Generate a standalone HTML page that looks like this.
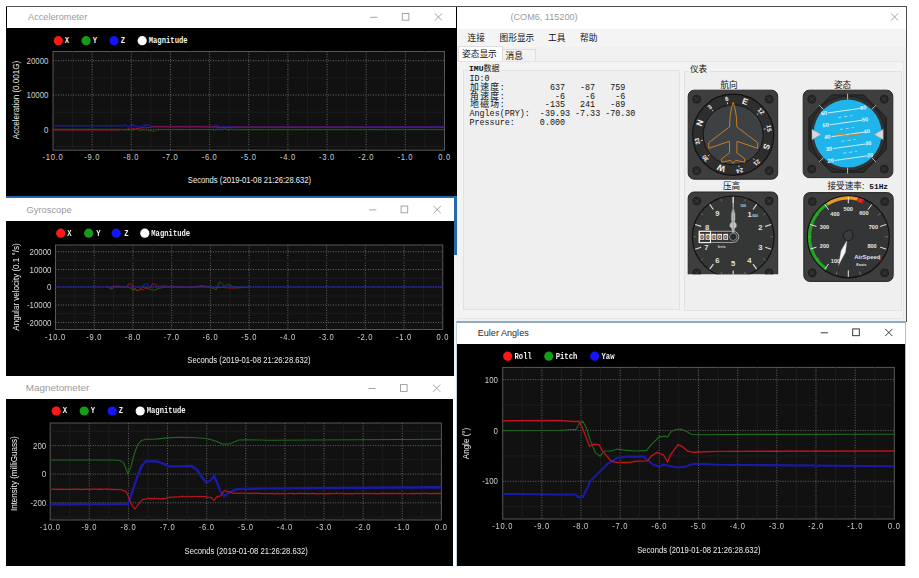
<!DOCTYPE html>
<html><head><meta charset="utf-8"><title>IMU</title>
<style>
html,body{margin:0;padding:0;background:#fff;}
body{width:919px;height:578px;position:relative;overflow:hidden;font-family:'Liberation Sans', 'Noto Sans CJK SC', sans-serif;}
#root{position:absolute;left:0;top:0;width:919px;height:578px;filter:blur(0.35px);}
.abs{position:absolute;}
.plot{position:absolute;display:block;}
.plot text{font-family:'Liberation Sans', 'Noto Sans CJK SC', sans-serif;fill:#d0d0d0;}
.plot .tk{font-size:9.2px;}
.plot .tx{font-size:9px;letter-spacing:0.85px;}
.plot .ax{font-size:9.6px;fill:#f0f0f0;}
.plot .lg{font-family:'Liberation Mono', 'Noto Sans CJK SC', monospace;font-weight:bold;font-size:8.8px;fill:#f4f4f4;}
.g{stroke:#666;stroke-width:1;stroke-dasharray:1 1.5;}
.gm{stroke:#1d1d1d;stroke-width:1;}
.tbar{position:absolute;background:#fff;height:22px;font-size:9.2px;color:#9a9a9a;line-height:22px;white-space:nowrap;}
.tbar span{position:absolute;top:0;}
.menu span,.tabs span{position:absolute;white-space:nowrap;}
pre{margin:0;}
.hz{font-family:'Liberation Mono', 'Noto Sans CJK SC', monospace;font-weight:bold;font-size:7.9px;margin-left:2.5px;}
.cj{display:inline-block;width:10.06px;text-align:center;font-size:8.8px;}
</style></head><body><div id="root">

<div class="abs" id="mainwin" style="left:456px;top:6px;width:449px;height:314.6px;background:#f0f0f0;border:1px solid #4d4d4d;border-bottom:none;border-left:1px solid #ececec;">
<div class="tbar" style="left:0;top:0;width:449px;height:21.5px;line-height:21.5px;font-size:9.1px;"><span style="left:53.5px;">(COM6, 115200)</span></div>
<div class="menu abs" style="left:0;top:21.5px;width:449px;height:18.5px;background:#f4f4f4;font-size:8.7px;line-height:18.5px;color:#111;"><span style="left:10.5px;">连接</span><span style="left:42.5px;">图形显示</span><span style="left:91px;">工具</span><span style="left:123px;">帮助</span></div>
<div class="tabs abs" style="left:0;top:40px;width:449px;height:14px;background:#f0f0f0;font-size:8.7px;color:#111;"><div class="abs" style="left:1px;top:-1px;width:44.5px;height:15.5px;background:#fff;border:1px solid #dcdcdc;border-bottom:none;box-sizing:border-box;"></div><div class="abs" style="left:45px;top:2px;width:33.5px;height:12px;background:#f2f2f2;border:1px solid #dedede;border-bottom:none;box-sizing:border-box;"></div><span style="left:5px;top:1px;line-height:13px;">姿态显示</span><span style="left:48.5px;top:2.5px;line-height:13px;">消息</span></div>
<div class="abs" style="left:0px;top:54px;width:447px;height:258px;background:#f3f3f3;border:1px solid #e6e6e6;border-left:none;box-sizing:border-box;"></div>
<div class="abs" style="left:5.5px;top:63px;width:217.5px;height:239.6px;border:1px solid #e2e2e2;box-sizing:border-box;background:#efefef;"></div>
<div class="abs" style="left:226.5px;top:63.5px;width:218px;height:240.8px;border:1px solid #e2e2e2;box-sizing:border-box;background:#efefef;"></div>
<div class="abs" style="left:10.5px;top:56px;padding:0 1.5px;background:#f0f0f0;font-family:'Liberation Mono', 'Noto Sans CJK SC', monospace;font-size:8.05px;line-height:12px;color:#111;white-space:nowrap;"><b>IMU</b>数据</div>
<div class="abs" style="left:231.5px;top:56.3px;padding:0 1.5px;background:#f0f0f0;font-size:8.6px;line-height:12px;color:#111;white-space:nowrap;">仪表</div>
<div class="abs" id="imu" style="left:12.5px;top:68.2px;font-family:'Liberation Mono', 'Noto Sans CJK SC', monospace;font-size:8.38px;line-height:8.7px;color:#111;"><div style="height:8.7px;white-space:pre;">ID:0</div><div style="height:8.7px;white-space:pre;"><span class="cj">加</span><span class="cj">速</span><span class="cj">度</span>:         637   -87   759</div><div style="height:8.7px;white-space:pre;"><span class="cj">角</span><span class="cj">速</span><span class="cj">度</span>:          -6    -6    -6</div><div style="height:8.7px;white-space:pre;"><span class="cj">地</span><span class="cj">磁</span><span class="cj">场</span>:        -135   241   -89</div><div style="height:8.7px;white-space:pre;">Angles(PRY):  -39.93 -7.33 -70.30</div><div style="height:8.7px;white-space:pre;">Pressure:     0.000</div></div>
<div class="abs" style="left:263.5px;top:72.5px;font-size:8.6px;line-height:11px;color:#111;white-space:nowrap;">航向</div>
<div class="abs" style="left:377px;top:72.5px;font-size:8.6px;line-height:11px;color:#111;white-space:nowrap;">姿态</div>
<div class="abs" style="left:266px;top:173.5px;font-size:8.6px;line-height:11px;color:#111;white-space:nowrap;">压高</div>
<div class="abs" style="left:370.5px;top:173.5px;font-size:8.6px;line-height:11px;color:#111;white-space:nowrap;">接受速率: <span class="hz">51Hz</span></div>
</div>
<svg class="abs" style="left:0;top:0;" width="919" height="578" viewBox="0 0 919 578"><defs><clipPath id="altclip"><rect x="686" y="190" width="95" height="84.2"/></clipPath></defs>
<path d="M891 13.3 l7.2 7.2 M898.2 13.3 l-7.2 7.2" stroke="#9a9a9a" stroke-width="0.9" fill="none"/>
<g><rect x="688.2" y="90.2" width="89.5" height="89" rx="6" fill="#3e3e3e" stroke="#262626" stroke-width="1"/><circle cx="696.7" cy="99.2" r="4" fill="#262626" stroke="#1c1c1c" stroke-width="0.8"/><path d="M694.5 97 l4.4 4.4 M698.9 97 l-4.4 4.4" stroke="#3a3a3a" stroke-width="0.9"/><circle cx="769.2" cy="99.2" r="4" fill="#262626" stroke="#1c1c1c" stroke-width="0.8"/><path d="M767 97 l4.4 4.4 M771.4 97 l-4.4 4.4" stroke="#3a3a3a" stroke-width="0.9"/><circle cx="696.7" cy="170.7" r="4" fill="#262626" stroke="#1c1c1c" stroke-width="0.8"/><path d="M694.5 168.5 l4.4 4.4 M698.9 168.5 l-4.4 4.4" stroke="#3a3a3a" stroke-width="0.9"/><circle cx="769.2" cy="170.7" r="4" fill="#262626" stroke="#1c1c1c" stroke-width="0.8"/><path d="M767 168.5 l4.4 4.4 M771.4 168.5 l-4.4 4.4" stroke="#3a3a3a" stroke-width="0.9"/><circle cx="733.2" cy="134.8" r="40.6" fill="#2e2e2e" stroke="#111" stroke-width="1.2"/><circle cx="733.2" cy="134.8" r="30" fill="#3d4144" stroke="#151515" stroke-width="1"/><text transform="translate(699.68 122.8) rotate(-70.3)" text-anchor="middle" font-family="'Liberation Sans', 'Noto Sans CJK SC', sans-serif" font-weight="bold" font-size="8.5" fill="#f4f4f4" y="3.06">N</text><text transform="translate(709.53 106.89) rotate(-40.3)" text-anchor="middle" font-family="'Liberation Sans', 'Noto Sans CJK SC', sans-serif" font-weight="bold" font-size="6.0" fill="#f4f4f4" y="2.16">3</text><line x1="713.15" y1="111.16" x2="711.86" y2="109.63" stroke="#eee" stroke-width="0.8"/><text transform="translate(726.66 98.79) rotate(-10.3)" text-anchor="middle" font-family="'Liberation Sans', 'Noto Sans CJK SC', sans-serif" font-weight="bold" font-size="6.0" fill="#f4f4f4" y="2.16">6</text><line x1="727.66" y1="104.3" x2="727.3" y2="102.33" stroke="#eee" stroke-width="0.8"/><text transform="translate(745.2 101.28) rotate(19.7)" text-anchor="middle" font-family="'Liberation Sans', 'Noto Sans CJK SC', sans-serif" font-weight="bold" font-size="8.5" fill="#f4f4f4" y="3.06">E</text><text transform="translate(761.11 111.13) rotate(49.7)" text-anchor="middle" font-family="'Liberation Sans', 'Noto Sans CJK SC', sans-serif" font-weight="bold" font-size="6.0" fill="#f4f4f4" y="2.16">12</text><line x1="756.84" y1="114.75" x2="758.37" y2="113.46" stroke="#eee" stroke-width="0.8"/><text transform="translate(769.21 128.26) rotate(79.7)" text-anchor="middle" font-family="'Liberation Sans', 'Noto Sans CJK SC', sans-serif" font-weight="bold" font-size="6.0" fill="#f4f4f4" y="2.16">15</text><line x1="763.7" y1="129.26" x2="765.67" y2="128.9" stroke="#eee" stroke-width="0.8"/><text transform="translate(766.72 146.8) rotate(109.7)" text-anchor="middle" font-family="'Liberation Sans', 'Noto Sans CJK SC', sans-serif" font-weight="bold" font-size="8.5" fill="#f4f4f4" y="3.06">S</text><text transform="translate(756.87 162.71) rotate(139.7)" text-anchor="middle" font-family="'Liberation Sans', 'Noto Sans CJK SC', sans-serif" font-weight="bold" font-size="6.0" fill="#f4f4f4" y="2.16">21</text><line x1="753.25" y1="158.44" x2="754.54" y2="159.97" stroke="#eee" stroke-width="0.8"/><text transform="translate(739.74 170.81) rotate(169.7)" text-anchor="middle" font-family="'Liberation Sans', 'Noto Sans CJK SC', sans-serif" font-weight="bold" font-size="6.0" fill="#f4f4f4" y="2.16">24</text><line x1="738.74" y1="165.3" x2="739.1" y2="167.27" stroke="#eee" stroke-width="0.8"/><text transform="translate(721.2 168.32) rotate(199.7)" text-anchor="middle" font-family="'Liberation Sans', 'Noto Sans CJK SC', sans-serif" font-weight="bold" font-size="8.5" fill="#f4f4f4" y="3.06">W</text><text transform="translate(705.29 158.47) rotate(229.7)" text-anchor="middle" font-family="'Liberation Sans', 'Noto Sans CJK SC', sans-serif" font-weight="bold" font-size="6.0" fill="#f4f4f4" y="2.16">30</text><line x1="709.56" y1="154.85" x2="708.03" y2="156.14" stroke="#eee" stroke-width="0.8"/><text transform="translate(697.19 141.34) rotate(259.7)" text-anchor="middle" font-family="'Liberation Sans', 'Noto Sans CJK SC', sans-serif" font-weight="bold" font-size="6.0" fill="#f4f4f4" y="2.16">33</text><line x1="702.7" y1="140.34" x2="700.73" y2="140.7" stroke="#eee" stroke-width="0.8"/><path d="M733.2 102.3 L734.8 107.8 L736.4 116.8 L736.8 126.8 L757.7 142.8 L757.7 148.3 L737 141.3 L736.8 152.8 L744.7 158.8 L744.7 162.3 L735.7 160.3 L733.2 163.3 L730.7 160.3 L721.7 162.3 L721.7 158.8 L729.6 152.8 L729.4 141.3 L708.7 148.3 L708.7 142.8 L729.6 126.8 L730 116.8 L731.6 107.8 Z" fill="none" stroke="#d8831c" stroke-width="0.9" stroke-linejoin="round"/></g>
<g><rect x="803.2" y="90.2" width="89.6" height="87.4" rx="6" fill="#3e3e3e" stroke="#262626" stroke-width="1"/><circle cx="811.7" cy="99.2" r="4" fill="#262626" stroke="#1c1c1c" stroke-width="0.8"/><path d="M809.5 97 l4.4 4.4 M813.9 97 l-4.4 4.4" stroke="#3a3a3a" stroke-width="0.9"/><circle cx="884.3" cy="99.2" r="4" fill="#262626" stroke="#1c1c1c" stroke-width="0.8"/><path d="M882.1 97 l4.4 4.4 M886.5 97 l-4.4 4.4" stroke="#3a3a3a" stroke-width="0.9"/><circle cx="811.7" cy="169.1" r="4" fill="#262626" stroke="#1c1c1c" stroke-width="0.8"/><path d="M809.5 166.9 l4.4 4.4 M813.9 166.9 l-4.4 4.4" stroke="#3a3a3a" stroke-width="0.9"/><circle cx="884.3" cy="169.1" r="4" fill="#262626" stroke="#1c1c1c" stroke-width="0.8"/><path d="M882.1 166.9 l4.4 4.4 M886.5 166.9 l-4.4 4.4" stroke="#3a3a3a" stroke-width="0.9"/><path d="M863.6 94.96 L886.24 117.6 L886.24 149.6 L863.6 172.24 L831.6 172.24 L808.96 149.6 L808.96 117.6 L831.6 94.96 Z" fill="#2c2c2c" stroke="#1a1a1a" stroke-width="1"/><circle cx="847.6" cy="133.6" r="37.5" fill="#333" stroke="#1b1b1b" stroke-width="0.8"/><line x1="847.6" y1="99.6" x2="847.6" y2="93.6" stroke="#c8c8c8" stroke-width="0.9"/><line x1="871.64" y1="109.56" x2="875.88" y2="105.32" stroke="#c8c8c8" stroke-width="0.9"/><line x1="871.64" y1="157.64" x2="875.88" y2="161.88" stroke="#c8c8c8" stroke-width="0.9"/><line x1="847.6" y1="167.6" x2="847.6" y2="173.6" stroke="#c8c8c8" stroke-width="0.9"/><line x1="823.56" y1="157.64" x2="819.32" y2="161.88" stroke="#c8c8c8" stroke-width="0.9"/><line x1="823.56" y1="109.56" x2="819.32" y2="105.32" stroke="#c8c8c8" stroke-width="0.9"/><circle cx="847.6" cy="133.6" r="34" fill="#1fb4ea"/><g transform="rotate(-8 847.6 133.6)" stroke="#e8f8ff" fill="#e8f8ff"><line x1="831.1" y1="110.4" x2="864.1" y2="110.4" stroke-width="0.8"/><text x="827.1" y="112" font-family="'Liberation Sans', 'Noto Sans CJK SC', sans-serif" font-size="5.6" font-weight="bold" stroke="none" text-anchor="middle">60</text><text x="866.8" y="112" font-family="'Liberation Sans', 'Noto Sans CJK SC', sans-serif" font-size="5.6" font-weight="bold" stroke="none" text-anchor="middle">60</text><line x1="840.6" y1="116.4" x2="854.6" y2="116.4" stroke-width="0.6" stroke-dasharray="3 3"/><line x1="831.1" y1="122.4" x2="864.1" y2="122.4" stroke-width="0.8"/><text x="827.1" y="124" font-family="'Liberation Sans', 'Noto Sans CJK SC', sans-serif" font-size="5.6" font-weight="bold" stroke="none" text-anchor="middle">50</text><text x="866.8" y="124" font-family="'Liberation Sans', 'Noto Sans CJK SC', sans-serif" font-size="5.6" font-weight="bold" stroke="none" text-anchor="middle">50</text><line x1="840.6" y1="128.4" x2="854.6" y2="128.4" stroke-width="0.6" stroke-dasharray="3 3"/><line x1="831.1" y1="134.4" x2="864.1" y2="134.4" stroke-width="0.8"/><text x="827.1" y="136" font-family="'Liberation Sans', 'Noto Sans CJK SC', sans-serif" font-size="5.6" font-weight="bold" stroke="none" text-anchor="middle">40</text><text x="866.8" y="136" font-family="'Liberation Sans', 'Noto Sans CJK SC', sans-serif" font-size="5.6" font-weight="bold" stroke="none" text-anchor="middle">40</text><line x1="840.6" y1="140.4" x2="854.6" y2="140.4" stroke-width="0.6" stroke-dasharray="3 3"/><line x1="831.1" y1="146.4" x2="864.1" y2="146.4" stroke-width="0.8"/><text x="827.1" y="148" font-family="'Liberation Sans', 'Noto Sans CJK SC', sans-serif" font-size="5.6" font-weight="bold" stroke="none" text-anchor="middle">30</text><text x="866.8" y="148" font-family="'Liberation Sans', 'Noto Sans CJK SC', sans-serif" font-size="5.6" font-weight="bold" stroke="none" text-anchor="middle">30</text><line x1="840.6" y1="152.4" x2="854.6" y2="152.4" stroke-width="0.6" stroke-dasharray="3 3"/><line x1="831.1" y1="158.4" x2="864.1" y2="158.4" stroke-width="0.8"/><text x="827.1" y="160" font-family="'Liberation Sans', 'Noto Sans CJK SC', sans-serif" font-size="5.6" font-weight="bold" stroke="none" text-anchor="middle">20</text><text x="866.8" y="160" font-family="'Liberation Sans', 'Noto Sans CJK SC', sans-serif" font-size="5.6" font-weight="bold" stroke="none" text-anchor="middle">20</text></g><path d="M812 139.7 l0 -10.4 l8.8 5.2 z" fill="#d8d8d8" stroke="#999" stroke-width="0.4"/><path d="M883.2 139.7 l0 -10.4 l-8.8 5.2 z" fill="#d8d8d8" stroke="#999" stroke-width="0.4"/><path d="M836.1 134.8 h9 l2.5 1.6 l2.5 -1.6 h9" fill="none" stroke="#d8831c" stroke-width="1.1"/></g>
<g clip-path="url(#altclip)"><rect x="688.2" y="192" width="89.5" height="92" rx="6" fill="#3e3e3e" stroke="#262626" stroke-width="1"/><circle cx="696.7" cy="201" r="4" fill="#262626" stroke="#1c1c1c" stroke-width="0.8"/><path d="M694.5 198.8 l4.4 4.4 M698.9 198.8 l-4.4 4.4" stroke="#3a3a3a" stroke-width="0.9"/><circle cx="769.2" cy="201" r="4" fill="#262626" stroke="#1c1c1c" stroke-width="0.8"/><path d="M767 198.8 l4.4 4.4 M771.4 198.8 l-4.4 4.4" stroke="#3a3a3a" stroke-width="0.9"/><circle cx="696.7" cy="273" r="4" fill="#262626" stroke="#1c1c1c" stroke-width="0.8"/><path d="M694.5 270.8 l4.4 4.4 M698.9 270.8 l-4.4 4.4" stroke="#3a3a3a" stroke-width="0.9"/><circle cx="769.2" cy="273" r="4" fill="#262626" stroke="#1c1c1c" stroke-width="0.8"/><path d="M767 270.8 l4.4 4.4 M771.4 270.8 l-4.4 4.4" stroke="#3a3a3a" stroke-width="0.9"/><circle cx="733.2" cy="236.8" r="40.8" fill="#343735" stroke="#111" stroke-width="1.2"/><line x1="733.2" y1="203.1" x2="733.2" y2="196.8" stroke="#dedede" stroke-width="1.1"/><line x1="744.63" y1="201.61" x2="745.56" y2="198.76" stroke="#7c7c7c" stroke-width="0.7"/><line x1="753.01" y1="209.54" x2="756.71" y2="204.44" stroke="#dedede" stroke-width="1.1"/><line x1="763.13" y1="215.05" x2="765.56" y2="213.29" stroke="#7c7c7c" stroke-width="0.7"/><line x1="765.25" y1="226.39" x2="771.24" y2="224.44" stroke="#dedede" stroke-width="1.1"/><line x1="770.2" y1="236.8" x2="773.2" y2="236.8" stroke="#7c7c7c" stroke-width="0.7"/><line x1="765.25" y1="247.21" x2="771.24" y2="249.16" stroke="#dedede" stroke-width="1.1"/><line x1="763.13" y1="258.55" x2="765.56" y2="260.31" stroke="#7c7c7c" stroke-width="0.7"/><line x1="753.01" y1="264.06" x2="756.71" y2="269.16" stroke="#dedede" stroke-width="1.1"/><line x1="744.63" y1="271.99" x2="745.56" y2="274.84" stroke="#7c7c7c" stroke-width="0.7"/><line x1="733.2" y1="270.5" x2="733.2" y2="276.8" stroke="#dedede" stroke-width="1.1"/><line x1="721.77" y1="271.99" x2="720.84" y2="274.84" stroke="#7c7c7c" stroke-width="0.7"/><line x1="713.39" y1="264.06" x2="709.69" y2="269.16" stroke="#dedede" stroke-width="1.1"/><line x1="703.27" y1="258.55" x2="700.84" y2="260.31" stroke="#7c7c7c" stroke-width="0.7"/><line x1="701.15" y1="247.21" x2="695.16" y2="249.16" stroke="#dedede" stroke-width="1.1"/><line x1="696.2" y1="236.8" x2="693.2" y2="236.8" stroke="#7c7c7c" stroke-width="0.7"/><line x1="701.15" y1="226.39" x2="695.16" y2="224.44" stroke="#dedede" stroke-width="1.1"/><line x1="703.27" y1="215.05" x2="700.84" y2="213.29" stroke="#7c7c7c" stroke-width="0.7"/><line x1="713.39" y1="209.54" x2="709.69" y2="204.44" stroke="#dedede" stroke-width="1.1"/><line x1="721.77" y1="201.61" x2="720.84" y2="198.76" stroke="#7c7c7c" stroke-width="0.7"/><text x="717.25" y="216.1" font-family="'Liberation Sans', 'Noto Sans CJK SC', sans-serif" font-size="7.6" font-weight="bold" fill="#e2e2e2" text-anchor="middle">9</text><text x="707" y="229.8" font-family="'Liberation Sans', 'Noto Sans CJK SC', sans-serif" font-size="7.6" font-weight="bold" fill="#e2e2e2" text-anchor="middle">8</text><text x="706.35" y="249.8" font-family="'Liberation Sans', 'Noto Sans CJK SC', sans-serif" font-size="7.6" font-weight="bold" fill="#e2e2e2" text-anchor="middle">7</text><text x="717.25" y="263.1" font-family="'Liberation Sans', 'Noto Sans CJK SC', sans-serif" font-size="7.6" font-weight="bold" fill="#e2e2e2" text-anchor="middle">6</text><text x="733.2" y="266.1" font-family="'Liberation Sans', 'Noto Sans CJK SC', sans-serif" font-size="7.6" font-weight="bold" fill="#e2e2e2" text-anchor="middle">5</text><text x="749.35" y="263.1" font-family="'Liberation Sans', 'Noto Sans CJK SC', sans-serif" font-size="7.6" font-weight="bold" fill="#e2e2e2" text-anchor="middle">4</text><text x="760.25" y="249.8" font-family="'Liberation Sans', 'Noto Sans CJK SC', sans-serif" font-size="7.6" font-weight="bold" fill="#e2e2e2" text-anchor="middle">3</text><text x="760.25" y="229.8" font-family="'Liberation Sans', 'Noto Sans CJK SC', sans-serif" font-size="7.6" font-weight="bold" fill="#e2e2e2" text-anchor="middle">2</text><text x="749.6" y="216.5" font-family="'Liberation Sans', 'Noto Sans CJK SC', sans-serif" font-size="7.6" font-weight="bold" fill="#e2e2e2" text-anchor="middle">1</text><text x="743" y="206.9" font-family="'Liberation Sans', 'Noto Sans CJK SC', sans-serif" font-size="3.4" font-weight="bold" fill="#d4d4d4" text-anchor="middle">100</text><text x="755" y="216.8" font-family="'Liberation Sans', 'Noto Sans CJK SC', sans-serif" font-size="3.4" font-weight="bold" fill="#d4d4d4" text-anchor="middle">000</text><text x="721.7" y="247.7" font-family="'Liberation Sans', 'Noto Sans CJK SC', sans-serif" font-size="3.4" font-weight="bold" fill="#d4d4d4" text-anchor="middle">feets</text><path d="M699 231.3 H733.2 a5.55 5.55 0 0 1 0 11.1 H699 Z" fill="#2f3130" stroke="#c4c4c4" stroke-width="0.8"/><rect x="699.5" y="233.8" width="4.8" height="6" fill="#ececec"/><text x="701.9" y="239.1" font-family="'Liberation Sans', 'Noto Sans CJK SC', sans-serif" font-size="6" font-weight="bold" fill="#1c1c1c" text-anchor="middle">0</text><rect x="705.5" y="233.8" width="4.8" height="6" fill="#ececec"/><text x="707.9" y="239.1" font-family="'Liberation Sans', 'Noto Sans CJK SC', sans-serif" font-size="6" font-weight="bold" fill="#1c1c1c" text-anchor="middle">0</text><rect x="711.5" y="233.8" width="4.8" height="6" fill="#ececec"/><text x="713.9" y="239.1" font-family="'Liberation Sans', 'Noto Sans CJK SC', sans-serif" font-size="6" font-weight="bold" fill="#1c1c1c" text-anchor="middle">0</text><rect x="717.3" y="233.8" width="4.8" height="6" fill="#ececec"/><text x="719.7" y="239.1" font-family="'Liberation Sans', 'Noto Sans CJK SC', sans-serif" font-size="6" font-weight="bold" fill="#1c1c1c" text-anchor="middle">0</text><rect x="723.3" y="233.8" width="4.8" height="6" fill="#ececec"/><text x="725.7" y="239.1" font-family="'Liberation Sans', 'Noto Sans CJK SC', sans-serif" font-size="6" font-weight="bold" fill="#1c1c1c" text-anchor="middle">0</text><rect x="699.3" y="231.3" width="11.2" height="11.3" fill="none" stroke="#f4f4f4" stroke-width="1.1"/><line x1="733.2" y1="197" x2="733.2" y2="208" stroke="#e4e4e4" stroke-width="0.9"/><path d="M733.2 207.1 L735.1 213.8 L735.2 219.8 L734.6 221.8 L736.6 224 L736.7 226.8 L734.9 228.2 L734.3 232.8 L732.1 232.8 L731.5 228.2 L729.7 226.8 L729.8 224 L731.8 221.8 L731.2 219.8 L731.3 213.8 Z" fill="#c4c6c4" stroke="#6a6a6a" stroke-width="0.5"/><line x1="733.2" y1="210.8" x2="733.2" y2="230.8" stroke="#777" stroke-width="0.6"/><circle cx="733.2" cy="236.8" r="3.7" fill="#2b2b2b" stroke="#9a9a9a" stroke-width="0.8"/></g>
<g><rect x="803.8" y="192.6" width="89.4" height="88.8" rx="6" fill="#3e3e3e" stroke="#262626" stroke-width="1"/><circle cx="812.3" cy="201.6" r="4" fill="#262626" stroke="#1c1c1c" stroke-width="0.8"/><path d="M810.1 199.4 l4.4 4.4 M814.5 199.4 l-4.4 4.4" stroke="#3a3a3a" stroke-width="0.9"/><circle cx="884.7" cy="201.6" r="4" fill="#262626" stroke="#1c1c1c" stroke-width="0.8"/><path d="M882.5 199.4 l4.4 4.4 M886.9 199.4 l-4.4 4.4" stroke="#3a3a3a" stroke-width="0.9"/><circle cx="812.3" cy="272.9" r="4" fill="#262626" stroke="#1c1c1c" stroke-width="0.8"/><path d="M810.1 270.7 l4.4 4.4 M814.5 270.7 l-4.4 4.4" stroke="#3a3a3a" stroke-width="0.9"/><circle cx="884.7" cy="272.9" r="4" fill="#262626" stroke="#1c1c1c" stroke-width="0.8"/><path d="M882.5 270.7 l4.4 4.4 M886.9 270.7 l-4.4 4.4" stroke="#3a3a3a" stroke-width="0.9"/><circle cx="848.3" cy="236.8" r="41" fill="#343536" stroke="#111" stroke-width="1.2"/><path d="M826.6 268.97 A38.8 38.8 0 0 1 827.17 204.26" fill="none" stroke="#1fa51f" stroke-width="3.2"/><path d="M827.17 204.26 A38.8 38.8 0 0 1 857.69 199.15" fill="none" stroke="#ee9a1c" stroke-width="3.2"/><path d="M857.54 199.73 A38.2 38.2 0 0 1 863.23 201.64" fill="none" stroke="#dd1c1c" stroke-width="4.4"/><line x1="848.3" y1="203.3" x2="848.3" y2="196.8" stroke="#e6e6e6" stroke-width="1.0"/><line x1="859.58" y1="202.09" x2="860.66" y2="198.76" stroke="#8a8a8a" stroke-width="0.7"/><line x1="867.99" y1="209.7" x2="871.81" y2="204.44" stroke="#e6e6e6" stroke-width="1.0"/><line x1="877.83" y1="215.35" x2="880.66" y2="213.29" stroke="#8a8a8a" stroke-width="0.7"/><line x1="880.16" y1="226.45" x2="886.34" y2="224.44" stroke="#e6e6e6" stroke-width="1.0"/><line x1="884.8" y1="236.8" x2="888.3" y2="236.8" stroke="#8a8a8a" stroke-width="0.7"/><line x1="880.16" y1="247.15" x2="886.34" y2="249.16" stroke="#e6e6e6" stroke-width="1.0"/><line x1="877.83" y1="258.25" x2="880.66" y2="260.31" stroke="#8a8a8a" stroke-width="0.7"/><line x1="871.81" y1="269.16" x2="871.81" y2="269.16" stroke="#e6e6e6" stroke-width="1.0"/><line x1="859.58" y1="271.51" x2="860.66" y2="274.84" stroke="#8a8a8a" stroke-width="0.7"/><line x1="848.3" y1="270.3" x2="848.3" y2="276.8" stroke="#e6e6e6" stroke-width="1.0"/><line x1="837.02" y1="271.51" x2="835.94" y2="274.84" stroke="#8a8a8a" stroke-width="0.7"/><line x1="828.61" y1="263.9" x2="824.79" y2="269.16" stroke="#e6e6e6" stroke-width="1.0"/><line x1="818.77" y1="258.25" x2="815.94" y2="260.31" stroke="#8a8a8a" stroke-width="0.7"/><line x1="816.44" y1="247.15" x2="810.26" y2="249.16" stroke="#e6e6e6" stroke-width="1.0"/><line x1="811.8" y1="236.8" x2="808.3" y2="236.8" stroke="#8a8a8a" stroke-width="0.7"/><line x1="816.44" y1="226.45" x2="810.26" y2="224.44" stroke="#e6e6e6" stroke-width="1.0"/><line x1="818.77" y1="215.35" x2="815.94" y2="213.29" stroke="#8a8a8a" stroke-width="0.7"/><line x1="828.61" y1="209.7" x2="824.79" y2="204.44" stroke="#e6e6e6" stroke-width="1.0"/><line x1="837.02" y1="202.09" x2="835.94" y2="198.76" stroke="#8a8a8a" stroke-width="0.7"/><text x="835.53" y="262.63" font-family="'Liberation Sans', 'Noto Sans CJK SC', sans-serif" font-size="5.6" font-weight="bold" fill="#e8e8e8" text-anchor="middle">100</text><text x="824.5" y="248.36" font-family="'Liberation Sans', 'Noto Sans CJK SC', sans-serif" font-size="5.6" font-weight="bold" fill="#e8e8e8" text-anchor="middle">200</text><text x="824.5" y="229.33" font-family="'Liberation Sans', 'Noto Sans CJK SC', sans-serif" font-size="5.6" font-weight="bold" fill="#e8e8e8" text-anchor="middle">300</text><text x="834.96" y="216.01" font-family="'Liberation Sans', 'Noto Sans CJK SC', sans-serif" font-size="5.6" font-weight="bold" fill="#e8e8e8" text-anchor="middle">400</text><text x="848.28" y="211.25" font-family="'Liberation Sans', 'Noto Sans CJK SC', sans-serif" font-size="5.6" font-weight="bold" fill="#e8e8e8" text-anchor="middle">500</text><text x="863.89" y="215.06" font-family="'Liberation Sans', 'Noto Sans CJK SC', sans-serif" font-size="5.6" font-weight="bold" fill="#e8e8e8" text-anchor="middle">600</text><text x="873.4" y="228.76" font-family="'Liberation Sans', 'Noto Sans CJK SC', sans-serif" font-size="5.6" font-weight="bold" fill="#e8e8e8" text-anchor="middle">700</text><text x="872.07" y="247.79" font-family="'Liberation Sans', 'Noto Sans CJK SC', sans-serif" font-size="5.6" font-weight="bold" fill="#e8e8e8" text-anchor="middle">800</text><text x="867.3" y="259.1" font-family="'Liberation Sans', 'Noto Sans CJK SC', sans-serif" font-size="6" font-weight="bold" fill="#e0e0e0" text-anchor="middle">AirSpeed</text><text x="861.3" y="266" font-family="'Liberation Sans', 'Noto Sans CJK SC', sans-serif" font-size="3.6" font-weight="bold" fill="#e0e0e0" text-anchor="middle">Knots</text><g transform="rotate(199 848.3 236.8)"><path d="M848.3 233.3 l2.4 -12 l-2.4 -15 l-2.4 15 z" fill="#f6f6f6" stroke="#888" stroke-width="0.3"/></g><path d="M850.5 229.4 c1.2 2.2 2.6 3.4 2.6 6.4 a4.9 4.9 0 1 1 -7.6 -4.2 c2 -1 3.6 -0.8 5 -2.2z" fill="#3a3b3c" stroke="#161616" stroke-width="0.9"/></g></g>
</svg>
<div class="abs" id="acc" style="left:6px;top:6px;width:451px;height:191.5px;background:#000;border-top:1px solid #555;box-sizing:border-box;">
<div class="tbar" style="left:0.5px;top:0;width:449.5px;height:21.5px;line-height:21px;"><span style="left:21.5px;">Accelerometer</span></div></div>
<svg class="plot" style="left:6.5px;top:28px" width="449.5" height="169" viewBox="6.5 28 449.5 169">
<rect x="6.5" y="28" width="449.5" height="169" fill="#000"/>
<rect x="52.5" y="51.5" width="391.5" height="98.7" fill="#111" stroke="#585858" stroke-width="1"/>
<line x1="72.08" y1="51.5" x2="72.08" y2="150.2" class="gm"/>
<line x1="91.65" y1="51.5" x2="91.65" y2="150.2" class="g"/>
<line x1="111.22" y1="51.5" x2="111.22" y2="150.2" class="gm"/>
<line x1="130.8" y1="51.5" x2="130.8" y2="150.2" class="g"/>
<line x1="150.38" y1="51.5" x2="150.38" y2="150.2" class="gm"/>
<line x1="169.95" y1="51.5" x2="169.95" y2="150.2" class="g"/>
<line x1="189.53" y1="51.5" x2="189.53" y2="150.2" class="gm"/>
<line x1="209.1" y1="51.5" x2="209.1" y2="150.2" class="g"/>
<line x1="228.67" y1="51.5" x2="228.67" y2="150.2" class="gm"/>
<line x1="248.25" y1="51.5" x2="248.25" y2="150.2" class="g"/>
<line x1="267.82" y1="51.5" x2="267.82" y2="150.2" class="gm"/>
<line x1="287.4" y1="51.5" x2="287.4" y2="150.2" class="g"/>
<line x1="306.98" y1="51.5" x2="306.98" y2="150.2" class="gm"/>
<line x1="326.55" y1="51.5" x2="326.55" y2="150.2" class="g"/>
<line x1="346.12" y1="51.5" x2="346.12" y2="150.2" class="gm"/>
<line x1="365.7" y1="51.5" x2="365.7" y2="150.2" class="g"/>
<line x1="385.27" y1="51.5" x2="385.27" y2="150.2" class="gm"/>
<line x1="404.85" y1="51.5" x2="404.85" y2="150.2" class="g"/>
<line x1="424.43" y1="51.5" x2="424.43" y2="150.2" class="gm"/>
<line x1="52.5" y1="60.7" x2="444" y2="60.7" class="g"/>
<text transform="translate(48 63.8) scale(0.86 1)" class="tk" text-anchor="end">20000</text>
<line x1="52.5" y1="95.05" x2="444" y2="95.05" class="g"/>
<text transform="translate(48 98.15) scale(0.86 1)" class="tk" text-anchor="end">10000</text>
<line x1="52.5" y1="129.4" x2="444" y2="129.4" class="g"/>
<text transform="translate(48 132.5) scale(0.86 1)" class="tk" text-anchor="end">0</text>
<line x1="52.5" y1="77.9" x2="444" y2="77.9" class="gm"/>
<line x1="52.5" y1="112.2" x2="444" y2="112.2" class="gm"/>
<line x1="52.5" y1="146.6" x2="444" y2="146.6" class="gm"/>
<text transform="translate(52.5 159.8) scale(0.84 1)" class="tx" text-anchor="middle">-10.0</text>
<text transform="translate(91.65 159.8) scale(0.84 1)" class="tx" text-anchor="middle">-9.0</text>
<text transform="translate(130.8 159.8) scale(0.84 1)" class="tx" text-anchor="middle">-8.0</text>
<text transform="translate(169.95 159.8) scale(0.84 1)" class="tx" text-anchor="middle">-7.0</text>
<text transform="translate(209.1 159.8) scale(0.84 1)" class="tx" text-anchor="middle">-6.0</text>
<text transform="translate(248.25 159.8) scale(0.84 1)" class="tx" text-anchor="middle">-5.0</text>
<text transform="translate(287.4 159.8) scale(0.84 1)" class="tx" text-anchor="middle">-4.0</text>
<text transform="translate(326.55 159.8) scale(0.84 1)" class="tx" text-anchor="middle">-3.0</text>
<text transform="translate(365.7 159.8) scale(0.84 1)" class="tx" text-anchor="middle">-2.0</text>
<text transform="translate(404.85 159.8) scale(0.84 1)" class="tx" text-anchor="middle">-1.0</text>
<text transform="translate(444 159.8) scale(0.84 1)" class="tx" text-anchor="middle">0.0</text>
<path d="M52.5 125.7 L122.97 125.7 L122.97 125.67 L124.34 124.99 L125.71 125.36 L127.08 126.6 L128.45 126.87 L129.82 124.71 L131.19 126.2 L132.56 124.72 L133.93 126.47 L135.3 125.46 L136.67 126.89 L138.04 127.15 L139.41 125.91 L140.78 127.2 L142.15 125.41 L143.52 124.8 L144.89 126.16 L146.26 124.68 L147.63 125.11 L149 125.66 L150.38 126.6 L213.01 126.6 L213.01 126.93 L214.39 125.57 L215.76 125.23 L217.13 127.7 L218.5 126.04 L219.87 127.98 L221.24 127.79 L222.61 126.23 L223.98 126.48 L225.35 126.66 L226.72 127.03 L228.09 126.89 L229.46 126.78 L230.83 126.96 L232.2 127.92 L232.59 126.9 L444 126.8" fill="none" stroke="#17179e" stroke-width="1.5" stroke-linejoin="miter"/>
<path d="M52.5 129.3 L119.05 129.3 L119.05 129.87 L120.23 129.57 L121.4 129.28 L122.58 130.16 L123.75 129.75 L124.93 130 L126.1 130.17 L127.28 130 L128.45 130.22 L129.63 129.66 L130.8 130.09 L131.97 129.72 L133.15 130.23 L134.32 130.17 L135.5 128.96 L136.67 129.07 L137.85 129.29 L139.02 131.31 L140.2 129.88 L141.37 130.39 L142.54 129.51 L143.72 130.07 L144.89 129.74 L146.07 129.65 L147.24 130.28 L148.42 130.28 L149.59 131.14 L150.77 130.54 L151.94 131.21 L153.12 131.01 L154.29 131.38 L155.46 129.95 L156.64 129.42 L157.81 130.15 L158.2 129.6 L213.01 129.7 L213.01 130.33 L214.58 130.21 L216.15 129.54 L217.71 129.83 L219.28 128.82 L220.84 130.06 L222.41 129.55 L223.98 128.97 L225.54 128.53 L227.11 130.11 L228.67 130.38 L230.24 128.58 L231.81 130 L232.59 129.8 L444 129.7" fill="none" stroke="#1b5e1b" stroke-width="0.9" stroke-linejoin="miter"/>
<path d="M52.5 130 L119.05 130 L119.05 129.74 L120.62 129.9 L122.19 129.59 L123.75 129.68 L125.32 129.56 L126.88 128.85 L128.45 128.66 L130.02 129.34 L131.58 128.62 L133.15 128.45 L134.71 129.07 L136.28 128.41 L137.85 128.63 L139.41 128.13 L140.98 128.15 L142.54 127.52 L144.11 127.86 L145.68 127.95 L147.24 127.46 L148.81 127.54 L150.37 127.33 L151.94 126.58 L153.51 127.13 L154.29 126.8 L209.1 126.9 L224.76 127.4 L236.5 127.1 L444 127.2" fill="none" stroke="#a81228" stroke-width="0.95" stroke-linejoin="miter"/>
<circle cx="57.8" cy="40.7" r="4.6" fill="#ff1818"/>
<text transform="translate(64.3 43.2) scale(0.82 1)" class="lg">X</text>
<circle cx="85.6" cy="40.7" r="4.6" fill="#179a17"/>
<text transform="translate(92.3 43.2) scale(0.82 1)" class="lg">Y</text>
<circle cx="113.6" cy="40.7" r="4.6" fill="#1414ff"/>
<text transform="translate(120.3 43.2) scale(0.82 1)" class="lg">Z</text>
<circle cx="141.7" cy="40.7" r="4.6" fill="#ffffff"/>
<text transform="translate(148.2 43.2) scale(0.82 1)" class="lg">Magnitude</text>
<text transform="translate(249 183.3) scale(0.8 1)" class="ax" text-anchor="middle">Seconds (2019-01-08 21:26:28.632)</text>
<text transform="translate(18.9 100) rotate(-90) scale(0.84 1)" class="ax" text-anchor="middle">Acceleration (0.001G)</text>
</svg>
<div class="abs" style="left:453.9px;top:196.4px;width:2.9px;height:58.6px;background:#246aab;"></div>
<div class="abs" style="left:453.9px;top:255px;width:2.9px;height:121.4px;background:#f4f4f6;"></div>
<div class="abs" id="gyr" style="left:6px;top:196.4px;width:447.9px;height:180.1px;background:#000;border-top:2.2px solid #2566a6;box-sizing:border-box;">
<div class="tbar" style="left:0;top:0;width:447.7px;height:22.4px;line-height:24.6px;font-size:9.35px;"><span style="left:20.5px;">Gyroscope</span></div></div>
<svg class="plot" style="left:6px;top:221px" width="447.9" height="155.4" viewBox="6 221 447.9 155.4">
<rect x="6" y="221" width="447.9" height="155.4" fill="#000"/>
<rect x="55.5" y="245" width="387.3" height="84.5" fill="#111" stroke="#585858" stroke-width="1"/>
<line x1="74.87" y1="245" x2="74.87" y2="329.5" class="gm"/>
<line x1="94.23" y1="245" x2="94.23" y2="329.5" class="g"/>
<line x1="113.59" y1="245" x2="113.59" y2="329.5" class="gm"/>
<line x1="132.96" y1="245" x2="132.96" y2="329.5" class="g"/>
<line x1="152.33" y1="245" x2="152.33" y2="329.5" class="gm"/>
<line x1="171.69" y1="245" x2="171.69" y2="329.5" class="g"/>
<line x1="191.06" y1="245" x2="191.06" y2="329.5" class="gm"/>
<line x1="210.42" y1="245" x2="210.42" y2="329.5" class="g"/>
<line x1="229.79" y1="245" x2="229.79" y2="329.5" class="gm"/>
<line x1="249.15" y1="245" x2="249.15" y2="329.5" class="g"/>
<line x1="268.51" y1="245" x2="268.51" y2="329.5" class="gm"/>
<line x1="287.88" y1="245" x2="287.88" y2="329.5" class="g"/>
<line x1="307.25" y1="245" x2="307.25" y2="329.5" class="gm"/>
<line x1="326.61" y1="245" x2="326.61" y2="329.5" class="g"/>
<line x1="345.98" y1="245" x2="345.98" y2="329.5" class="gm"/>
<line x1="365.34" y1="245" x2="365.34" y2="329.5" class="g"/>
<line x1="384.71" y1="245" x2="384.71" y2="329.5" class="gm"/>
<line x1="404.07" y1="245" x2="404.07" y2="329.5" class="g"/>
<line x1="423.44" y1="245" x2="423.44" y2="329.5" class="gm"/>
<line x1="55.5" y1="251.75" x2="442.8" y2="251.75" class="g"/>
<text transform="translate(51.5 254.85) scale(0.86 1)" class="tk" text-anchor="end">20000</text>
<line x1="55.5" y1="269.5" x2="442.8" y2="269.5" class="g"/>
<text transform="translate(51.5 272.6) scale(0.86 1)" class="tk" text-anchor="end">10000</text>
<line x1="55.5" y1="287" x2="442.8" y2="287" class="g"/>
<text transform="translate(51.5 290.1) scale(0.86 1)" class="tk" text-anchor="end">0</text>
<line x1="55.5" y1="305" x2="442.8" y2="305" class="g"/>
<text transform="translate(51.5 308.1) scale(0.86 1)" class="tk" text-anchor="end">-10000</text>
<line x1="55.5" y1="322.5" x2="442.8" y2="322.5" class="g"/>
<text transform="translate(51.5 325.6) scale(0.86 1)" class="tk" text-anchor="end">-20000</text>
<line x1="55.5" y1="260.6" x2="442.8" y2="260.6" class="gm"/>
<line x1="55.5" y1="278.2" x2="442.8" y2="278.2" class="gm"/>
<line x1="55.5" y1="296" x2="442.8" y2="296" class="gm"/>
<line x1="55.5" y1="313.7" x2="442.8" y2="313.7" class="gm"/>
<text transform="translate(55.5 339.7) scale(0.84 1)" class="tx" text-anchor="middle">-10.0</text>
<text transform="translate(94.23 339.7) scale(0.84 1)" class="tx" text-anchor="middle">-9.0</text>
<text transform="translate(132.96 339.7) scale(0.84 1)" class="tx" text-anchor="middle">-8.0</text>
<text transform="translate(171.69 339.7) scale(0.84 1)" class="tx" text-anchor="middle">-7.0</text>
<text transform="translate(210.42 339.7) scale(0.84 1)" class="tx" text-anchor="middle">-6.0</text>
<text transform="translate(249.15 339.7) scale(0.84 1)" class="tx" text-anchor="middle">-5.0</text>
<text transform="translate(287.88 339.7) scale(0.84 1)" class="tx" text-anchor="middle">-4.0</text>
<text transform="translate(326.61 339.7) scale(0.84 1)" class="tx" text-anchor="middle">-3.0</text>
<text transform="translate(365.34 339.7) scale(0.84 1)" class="tx" text-anchor="middle">-2.0</text>
<text transform="translate(404.07 339.7) scale(0.84 1)" class="tx" text-anchor="middle">-1.0</text>
<text transform="translate(442.8 339.7) scale(0.84 1)" class="tx" text-anchor="middle">0.0</text>
<path d="M109.72 287 L111.66 289 L115.53 286.2 L121.34 286.5 L129.09 287.5 L132.96 290 L134.9 288 L136.83 291 L140.71 289.5 L142.64 286 L146.52 288 L150.39 289.5 L154.26 290.5 L158.13 288.5 L163.94 287.5 L175.56 286.5 L179.44 287.3 L194.93 287 L200.74 285.8 L206.55 286.4 L212.36 287.8 L216.23 290 L218.17 285 L220.1 281.5 L222.81 284.5 L225.14 286.5 L227.85 284 L231.72 286 L237.53 288 L243.34 287.5 L249.15 287" fill="none" stroke="#1c6c1c" stroke-width="0.8" stroke-linejoin="miter"/>
<path d="M105.85 287 L107.79 286.5 L110.5 289.5 L112.82 286 L117.47 287 L127.15 287 L128.31 284 L131.8 284 L132.96 288.5 L134.9 290 L138.77 290.5 L140.71 288 L142.64 290.5 L144.58 288.5 L150.39 287.5 L152.33 284 L155.42 284 L156.97 286.5 L163.94 285.8 L171.69 287 L198.8 287 L202.67 286 L210.42 287.8 L222.04 287.5 L233.66 288.2 L241.4 287" fill="none" stroke="#b8141c" stroke-width="0.8" stroke-linejoin="miter"/>
<path d="M55.5 287 L142.64 287 L144.58 284 L147.68 284 L148.45 287 L442.8 287" fill="none" stroke="#1a1ab0" stroke-width="1.15" stroke-linejoin="miter"/>
<circle cx="60.7" cy="233.2" r="4.6" fill="#ff1818"/>
<text transform="translate(67.3 235.7) scale(0.82 1)" class="lg">X</text>
<circle cx="88.7" cy="233.2" r="4.6" fill="#179a17"/>
<text transform="translate(96.3 235.7) scale(0.82 1)" class="lg">Y</text>
<circle cx="116.2" cy="233.2" r="4.6" fill="#1414ff"/>
<text transform="translate(124.2 235.7) scale(0.82 1)" class="lg">Z</text>
<circle cx="144.8" cy="233.2" r="4.6" fill="#ffffff"/>
<text transform="translate(151.3 235.7) scale(0.82 1)" class="lg">Magnitude</text>
<text transform="translate(249 363.3) scale(0.8 1)" class="ax" text-anchor="middle">Seconds (2019-01-08 21:26:28.632)</text>
<text transform="translate(18.8 287) rotate(-90) scale(0.84 1)" class="ax" text-anchor="middle">Angular velocity (0.1 °/s)</text>
</svg>
<div class="abs" id="mag" style="left:6.3px;top:376.4px;width:447.1px;height:190px;background:#000;">
<div class="tbar" style="left:0;top:0;width:447.1px;height:22.9px;line-height:24.5px;font-size:9.9px;"><span style="left:19.4px;">Magnetometer</span></div></div>
<svg class="plot" style="left:6.3px;top:399.3px" width="447.1" height="167.1" viewBox="6.3 399.3 447.1 167.1">
<rect x="6.3" y="399.3" width="447.1" height="167.1" fill="#000"/>
<rect x="50.5" y="423.3" width="391.2" height="97" fill="#111" stroke="#585858" stroke-width="1"/>
<line x1="70.06" y1="423.3" x2="70.06" y2="520.3" class="gm"/>
<line x1="89.62" y1="423.3" x2="89.62" y2="520.3" class="g"/>
<line x1="109.18" y1="423.3" x2="109.18" y2="520.3" class="gm"/>
<line x1="128.74" y1="423.3" x2="128.74" y2="520.3" class="g"/>
<line x1="148.3" y1="423.3" x2="148.3" y2="520.3" class="gm"/>
<line x1="167.86" y1="423.3" x2="167.86" y2="520.3" class="g"/>
<line x1="187.42" y1="423.3" x2="187.42" y2="520.3" class="gm"/>
<line x1="206.98" y1="423.3" x2="206.98" y2="520.3" class="g"/>
<line x1="226.54" y1="423.3" x2="226.54" y2="520.3" class="gm"/>
<line x1="246.1" y1="423.3" x2="246.1" y2="520.3" class="g"/>
<line x1="265.66" y1="423.3" x2="265.66" y2="520.3" class="gm"/>
<line x1="285.22" y1="423.3" x2="285.22" y2="520.3" class="g"/>
<line x1="304.78" y1="423.3" x2="304.78" y2="520.3" class="gm"/>
<line x1="324.34" y1="423.3" x2="324.34" y2="520.3" class="g"/>
<line x1="343.9" y1="423.3" x2="343.9" y2="520.3" class="gm"/>
<line x1="363.46" y1="423.3" x2="363.46" y2="520.3" class="g"/>
<line x1="383.02" y1="423.3" x2="383.02" y2="520.3" class="gm"/>
<line x1="402.58" y1="423.3" x2="402.58" y2="520.3" class="g"/>
<line x1="422.14" y1="423.3" x2="422.14" y2="520.3" class="gm"/>
<line x1="50.5" y1="445.9" x2="441.7" y2="445.9" class="g"/>
<text transform="translate(46.5 449) scale(0.86 1)" class="tk" text-anchor="end">200</text>
<line x1="50.5" y1="474.4" x2="441.7" y2="474.4" class="g"/>
<text transform="translate(46.5 477.5) scale(0.86 1)" class="tk" text-anchor="end">0</text>
<line x1="50.5" y1="503.1" x2="441.7" y2="503.1" class="g"/>
<text transform="translate(46.5 506.2) scale(0.86 1)" class="tk" text-anchor="end">-200</text>
<line x1="50.5" y1="431.6" x2="441.7" y2="431.6" class="gm"/>
<line x1="50.5" y1="460.1" x2="441.7" y2="460.1" class="gm"/>
<line x1="50.5" y1="488.7" x2="441.7" y2="488.7" class="gm"/>
<line x1="50.5" y1="517.3" x2="441.7" y2="517.3" class="gm"/>
<text transform="translate(50.5 530) scale(0.84 1)" class="tx" text-anchor="middle">-10.0</text>
<text transform="translate(89.62 530) scale(0.84 1)" class="tx" text-anchor="middle">-9.0</text>
<text transform="translate(128.74 530) scale(0.84 1)" class="tx" text-anchor="middle">-8.0</text>
<text transform="translate(167.86 530) scale(0.84 1)" class="tx" text-anchor="middle">-7.0</text>
<text transform="translate(206.98 530) scale(0.84 1)" class="tx" text-anchor="middle">-6.0</text>
<text transform="translate(246.1 530) scale(0.84 1)" class="tx" text-anchor="middle">-5.0</text>
<text transform="translate(285.22 530) scale(0.84 1)" class="tx" text-anchor="middle">-4.0</text>
<text transform="translate(324.34 530) scale(0.84 1)" class="tx" text-anchor="middle">-3.0</text>
<text transform="translate(363.46 530) scale(0.84 1)" class="tx" text-anchor="middle">-2.0</text>
<text transform="translate(402.58 530) scale(0.84 1)" class="tx" text-anchor="middle">-1.0</text>
<text transform="translate(441.7 530) scale(0.84 1)" class="tx" text-anchor="middle">0.0</text>
<path d="M50.5 460.3 L110 460.32 L119.08 460.5 L123.62 462.68 L126.35 469.04 L128.16 473.94 L130.89 468.13 L134.52 454.51 L138.15 444.52 L141.78 440.89 L146.32 439.61 L155.41 439.43 L168.12 438.16 L179.02 437.62 L191.73 437.8 L204.44 438.53 L211.71 439.98 L217.16 441.79 L222.6 444.16 L228.05 444.52 L233.5 442.7 L238.95 440.34 L248.03 439.98 L270.01 440.52 L441.7 439.6" fill="none" stroke="#1c6c1c" stroke-width="1.1" stroke-linejoin="miter"/>
<path d="M50.5 504.5 L110 504.45 L128.16 504.45 L129.98 499.91 L133.61 489.02 L137.24 478.12 L141.78 466.31 L146.32 461.41 L157.22 461.77 L164.49 464.5 L169.93 466.86 L191.73 466.31 L197.18 469.95 L202.63 478.12 L206.26 482.66 L210.8 480.84 L214.43 476.3 L217.16 482.66 L220.79 491.74 L224.42 496.28 L229.87 492.65 L237.13 489.38 L248.03 489.02 L270.01 488.65 L441.7 487.5" fill="none" stroke="#1a1aa8" stroke-width="2.4" stroke-linejoin="miter"/>
<path d="M50.5 489.81 L51.3 489.82 L52.11 489.59 L52.91 489.43 L53.72 489.25 L54.52 489.71 L55.32 489.58 L56.13 489.78 L56.93 489.51 L57.74 489.78 L58.54 489.44 L59.34 489.81 L60.15 489.75 L60.95 489.53 L61.76 489.62 L62.56 489.72 L63.36 489.38 L64.17 489.63 L64.97 489.8 L65.78 489.43 L66.58 489.8 L67.39 489.72 L68.19 489.83 L68.99 489.47 L69.8 489.3 L70.6 489.8 L71.41 489.8 L72.21 489.55 L73.01 489.3 L73.82 489.37 L74.62 489.68 L75.43 489.44 L76.23 489.9 L77.03 489.64 L77.84 489.37 L78.64 489.69 L79.45 489.48 L80.25 489.88 L81.05 489.87 L81.86 489.59 L82.66 489.68 L83.47 489.72 L84.27 489.79 L85.07 489.91 L85.88 489.25 L86.68 489.48 L87.49 489.65 L88.29 489.44 L89.09 489.64 L89.9 489.29 L90.7 489.84 L91.51 489.59 L92.31 489.3 L93.11 489.69 L93.92 489.44 L94.72 489.36 L95.53 489.56 L96.33 489.32 L97.14 489.37 L97.94 489.82 L98.74 489.71 L99.55 489.23 L100.35 489.76 L101.16 489.23 L101.96 489.45 L102.76 489.85 L103.57 489.65 L104.37 489.43 L105.18 489.48 L105.98 489.49 L106.78 489.3 L107.59 489.91 L108.39 489.25 L109.2 489.51 L110 489.73 L110.84 489.52 L111.68 489.95 L112.51 489.47 L113.35 490.01 L114.19 489.97 L115.03 489.85 L115.87 490.03 L116.71 489.75 L117.54 490.04 L118.38 490.05 L119.22 489.88 L120.06 489.88 L120.9 490.07 L121.81 490.16 L122.71 490.24 L123.62 491 L124.53 490.97 L125.44 491.43 L126.35 491.94 L127.25 493.63 L128.16 495.64 L129.07 497.83 L129.98 500.28 L130.89 502.24 L131.79 504.28 L132.61 505.65 L133.43 507.2 L134.25 507.96 L135.06 509.29 L136.09 508.29 L137.12 506.77 L138.15 505.2 L139.06 504.25 L139.97 503.17 L140.88 501.84 L141.78 500.92 L142.69 499.78 L143.6 499.91 L144.51 499.37 L145.42 499.39 L146.32 499.39 L147.23 499.15 L148.14 498.55 L148.95 498.73 L149.75 498.56 L150.56 498.63 L151.37 498.71 L152.18 498.95 L152.98 499.07 L153.79 498.64 L154.6 498.46 L155.41 498.79 L156.21 498.53 L157.02 498.53 L157.83 499.08 L158.63 498.63 L159.44 499.08 L160.25 498.85 L161.06 499.27 L161.86 499.23 L162.67 498.7 L163.48 498.65 L164.28 499.04 L165.09 498.66 L165.9 498.39 L166.71 498.5 L167.51 498.38 L168.32 498.01 L169.13 497.85 L169.93 497.45 L170.78 497.58 L171.63 497.36 L172.48 497.64 L173.32 497.57 L174.17 497.18 L175.02 497.46 L175.87 497.03 L176.72 496.97 L177.56 497.29 L178.41 497.1 L179.26 497.35 L180.11 497.1 L180.95 497.09 L181.8 496.62 L182.65 497.06 L183.46 496.53 L184.26 496.91 L185.07 497.11 L185.88 497.11 L186.68 497.1 L187.49 496.79 L188.3 496.96 L189.11 497.03 L189.91 496.57 L190.72 497.14 L191.53 497.11 L192.33 496.78 L193.14 497.02 L193.95 496.79 L194.76 496.67 L195.56 496.97 L196.37 496.52 L197.18 497.04 L197.98 497.16 L198.79 496.68 L199.6 497.13 L200.41 496.53 L201.21 497.08 L202.02 496.67 L202.83 497.15 L203.64 496.78 L204.44 497.12 L205.25 496.64 L206.06 496.82 L206.86 497.47 L207.67 497.49 L208.48 497.56 L209.29 497.35 L210.09 497.59 L210.9 497.86 L211.71 497.78 L212.62 499.23 L213.52 499.86 L214.43 500.77 L215.34 499.51 L216.25 498.17 L217.16 496.89 L218.06 497.12 L218.97 496.46 L219.88 496.54 L220.79 496.26 L221.7 495.01 L222.6 493.44 L223.51 492.17 L224.42 491.21 L225.33 491 L226.24 491.49 L227.14 491.36 L228.05 491.59 L228.96 491.8 L229.87 492.39 L230.78 492.57 L231.69 492.76 L232.59 493.06 L233.5 493.6 L234.31 493.84 L235.12 493.5 L235.92 493.32 L236.73 493.43 L237.54 493.37 L238.34 493.61 L239.15 493.76 L239.96 493.6 L240.77 493.34 L241.57 493.43 L242.38 493.47 L243.19 493.51 L244 493.48 L244.8 493.9 L245.61 493.59 L246.42 493.67 L247.22 493.71 L248.03 493.66 L248.85 493.78 L249.66 493.49 L250.47 493.71 L251.29 493.94 L252.1 493.39 L252.91 493.72 L253.73 493.57 L254.54 493.36 L255.36 493.36 L256.17 493.87 L256.98 493.43 L257.8 493.87 L258.61 493.45 L259.43 493.65 L260.24 493.43 L261.05 493.8 L261.87 493.99 L262.68 493.61 L263.5 493.86 L264.31 494.12 L265.12 493.69 L265.94 493.83 L266.75 494.02 L267.57 494.13 L268.38 493.66 L269.19 494.02 L270.01 493.65 L270.81 493.65 L271.61 494.26 L272.41 493.6 L273.22 494.21 L274.02 494.09 L274.82 494.04 L275.62 494.08 L276.43 494.02 L277.23 493.77 L278.03 493.87 L278.83 493.7 L279.63 494.16 L280.44 494.11 L281.24 494.11 L282.04 493.71 L282.84 493.97 L283.65 493.74 L284.45 494.11 L285.25 494.08 L286.05 494.25 L286.86 494.05 L287.66 494.04 L288.46 494.1 L289.26 493.62 L290.06 493.97 L290.87 493.58 L291.67 493.81 L292.47 493.64 L293.27 494.22 L294.08 493.57 L294.88 494.2 L295.68 494.22 L296.48 493.86 L297.29 494.13 L298.09 493.59 L298.89 493.65 L299.69 493.56 L300.49 493.6 L301.3 493.55 L302.1 494.13 L302.9 493.61 L303.7 493.96 L304.51 493.74 L305.31 493.64 L306.11 493.84 L306.91 493.67 L307.72 494.23 L308.52 493.81 L309.32 493.96 L310.12 493.94 L310.92 493.98 L311.73 493.88 L312.53 493.73 L313.33 493.63 L314.13 494.16 L314.94 493.67 L315.74 493.85 L316.54 494.1 L317.34 493.94 L318.15 494.2 L318.95 494.1 L319.75 493.89 L320.55 493.62 L321.35 493.95 L322.16 493.86 L322.96 494.14 L323.76 493.9 L324.56 494.02 L325.37 494.1 L326.17 493.86 L326.97 494.12 L327.77 494.16 L328.58 493.64 L329.38 494.17 L330.18 494.14 L330.98 494.13 L331.78 493.76 L332.59 493.7 L333.39 493.62 L334.19 493.78 L334.99 494.12 L335.8 493.78 L336.6 493.53 L337.4 493.74 L338.2 493.58 L339.01 493.96 L339.81 494.06 L340.61 494.17 L341.41 493.58 L342.21 493.79 L343.02 493.61 L343.82 494.16 L344.62 494.1 L345.42 493.88 L346.23 494.18 L347.03 493.88 L347.83 494.06 L348.63 493.86 L349.44 493.77 L350.24 494.21 L351.04 494.1 L351.84 493.93 L352.64 494.12 L353.45 493.97 L354.25 494.07 L355.05 493.56 L355.85 493.6 L356.66 493.59 L357.46 493.93 L358.26 494.01 L359.06 493.62 L359.87 493.86 L360.67 493.59 L361.47 493.99 L362.27 494.05 L363.07 493.57 L363.88 494.19 L364.68 493.97 L365.48 493.59 L366.28 493.75 L367.09 493.61 L367.89 494.01 L368.69 494.14 L369.49 493.62 L370.3 493.63 L371.1 493.94 L371.9 494.1 L372.7 494.02 L373.5 493.82 L374.31 493.57 L375.11 493.93 L375.91 493.81 L376.71 494.06 L377.52 493.89 L378.32 494.01 L379.12 494.17 L379.92 493.93 L380.73 494.13 L381.53 493.68 L382.33 493.49 L383.13 494.11 L383.93 493.51 L384.74 494.19 L385.54 493.81 L386.34 493.53 L387.14 493.68 L387.95 493.99 L388.75 493.76 L389.55 493.92 L390.35 493.56 L391.15 494.07 L391.96 493.75 L392.76 494.07 L393.56 493.59 L394.36 493.95 L395.17 493.81 L395.97 493.76 L396.77 493.49 L397.57 493.85 L398.38 494.07 L399.18 493.55 L399.98 493.79 L400.78 493.49 L401.58 494.17 L402.39 494.16 L403.19 493.95 L403.99 493.81 L404.79 493.52 L405.6 493.56 L406.4 493.97 L407.2 494.03 L408 494.17 L408.81 494.08 L409.61 493.78 L410.41 493.65 L411.21 493.85 L412.01 493.71 L412.82 493.85 L413.62 494.09 L414.42 493.79 L415.22 494.16 L416.03 493.97 L416.83 493.5 L417.63 493.99 L418.43 493.93 L419.24 493.9 L420.04 493.47 L420.84 494.08 L421.64 493.81 L422.44 493.84 L423.25 493.58 L424.05 493.49 L424.85 493.47 L425.65 493.61 L426.46 493.67 L427.26 493.57 L428.06 493.5 L428.86 493.97 L429.67 493.95 L430.47 494.08 L431.27 493.61 L432.07 493.97 L432.87 493.87 L433.68 493.52 L434.48 494.07 L435.28 493.7 L436.08 493.58 L436.89 493.58 L437.69 494.1 L438.49 493.61 L439.29 493.72 L440.1 493.83 L440.9 493.7 L441.7 493.8" fill="none" stroke="#b8141c" stroke-width="1.2" stroke-linejoin="miter"/>
<circle cx="56.5" cy="411.3" r="4.6" fill="#ff1818"/>
<text transform="translate(63 413.8) scale(0.82 1)" class="lg">X</text>
<circle cx="84.5" cy="411.3" r="4.6" fill="#179a17"/>
<text transform="translate(91 413.8) scale(0.82 1)" class="lg">Y</text>
<circle cx="112.5" cy="411.3" r="4.6" fill="#1414ff"/>
<text transform="translate(119 413.8) scale(0.82 1)" class="lg">Z</text>
<circle cx="140.5" cy="411.3" r="4.6" fill="#ffffff"/>
<text transform="translate(147 413.8) scale(0.82 1)" class="lg">Magnitude</text>
<text transform="translate(246.5 554.5) scale(0.8 1)" class="ax" text-anchor="middle">Seconds (2019-01-08 21:26:28.632)</text>
<text transform="translate(17.6 474) rotate(-90) scale(0.84 1)" class="ax" text-anchor="middle">Intensity (milliGuass)</text>
</svg>
<div class="abs" id="eul" style="left:456px;top:321px;width:450px;height:244.7px;background:#000;border-top:2px solid #8fa9c2;border-left:1px solid #bcd5e6;border-right:1px solid #9fc3dc;box-sizing:border-box;">
<div class="tbar" style="left:0;top:0;width:448px;height:21px;line-height:21px;color:#2b2b2b;font-size:9.1px;"><span style="left:20.7px;">Euler Angles</span></div></div>
<svg class="plot" style="left:457px;top:344px" width="448" height="221.5" viewBox="457 344 448 221.5">
<rect x="457" y="344" width="448" height="221.5" fill="#000"/>
<rect x="502.7" y="367.4" width="391.6" height="151.6" fill="#111" stroke="#585858" stroke-width="1"/>
<line x1="522.28" y1="367.4" x2="522.28" y2="519" class="gm"/>
<line x1="541.86" y1="367.4" x2="541.86" y2="519" class="g"/>
<line x1="561.44" y1="367.4" x2="561.44" y2="519" class="gm"/>
<line x1="581.02" y1="367.4" x2="581.02" y2="519" class="g"/>
<line x1="600.6" y1="367.4" x2="600.6" y2="519" class="gm"/>
<line x1="620.18" y1="367.4" x2="620.18" y2="519" class="g"/>
<line x1="639.76" y1="367.4" x2="639.76" y2="519" class="gm"/>
<line x1="659.34" y1="367.4" x2="659.34" y2="519" class="g"/>
<line x1="678.92" y1="367.4" x2="678.92" y2="519" class="gm"/>
<line x1="698.5" y1="367.4" x2="698.5" y2="519" class="g"/>
<line x1="718.08" y1="367.4" x2="718.08" y2="519" class="gm"/>
<line x1="737.66" y1="367.4" x2="737.66" y2="519" class="g"/>
<line x1="757.24" y1="367.4" x2="757.24" y2="519" class="gm"/>
<line x1="776.82" y1="367.4" x2="776.82" y2="519" class="g"/>
<line x1="796.4" y1="367.4" x2="796.4" y2="519" class="gm"/>
<line x1="815.98" y1="367.4" x2="815.98" y2="519" class="g"/>
<line x1="835.56" y1="367.4" x2="835.56" y2="519" class="gm"/>
<line x1="855.14" y1="367.4" x2="855.14" y2="519" class="g"/>
<line x1="874.72" y1="367.4" x2="874.72" y2="519" class="gm"/>
<line x1="502.7" y1="379.6" x2="894.3" y2="379.6" class="g"/>
<text transform="translate(498 382.7) scale(0.86 1)" class="tk" text-anchor="end">100</text>
<line x1="502.7" y1="430.45" x2="894.3" y2="430.45" class="g"/>
<text transform="translate(498 433.55) scale(0.86 1)" class="tk" text-anchor="end">0</text>
<line x1="502.7" y1="481.3" x2="894.3" y2="481.3" class="g"/>
<text transform="translate(498 484.4) scale(0.86 1)" class="tk" text-anchor="end">-100</text>
<line x1="502.7" y1="405" x2="894.3" y2="405" class="gm"/>
<line x1="502.7" y1="455.9" x2="894.3" y2="455.9" class="gm"/>
<line x1="502.7" y1="506.7" x2="894.3" y2="506.7" class="gm"/>
<text transform="translate(502.7 528.7) scale(0.84 1)" class="tx" text-anchor="middle">-10.0</text>
<text transform="translate(541.86 528.7) scale(0.84 1)" class="tx" text-anchor="middle">-9.0</text>
<text transform="translate(581.02 528.7) scale(0.84 1)" class="tx" text-anchor="middle">-8.0</text>
<text transform="translate(620.18 528.7) scale(0.84 1)" class="tx" text-anchor="middle">-7.0</text>
<text transform="translate(659.34 528.7) scale(0.84 1)" class="tx" text-anchor="middle">-6.0</text>
<text transform="translate(698.5 528.7) scale(0.84 1)" class="tx" text-anchor="middle">-5.0</text>
<text transform="translate(737.66 528.7) scale(0.84 1)" class="tx" text-anchor="middle">-4.0</text>
<text transform="translate(776.82 528.7) scale(0.84 1)" class="tx" text-anchor="middle">-3.0</text>
<text transform="translate(815.98 528.7) scale(0.84 1)" class="tx" text-anchor="middle">-2.0</text>
<text transform="translate(855.14 528.7) scale(0.84 1)" class="tx" text-anchor="middle">-1.0</text>
<text transform="translate(894.3 528.7) scale(0.84 1)" class="tx" text-anchor="middle">0.0</text>
<path d="M502.7 430.7 L560 430.44 L571.42 429.49 L576.17 429.49 L579.03 423.78 L582.83 421.31 L586.64 428.54 L590.44 440.91 L595.2 452.32 L599.95 456.13 L604.71 450.99 L611.37 450.99 L617.08 449.09 L626.59 450.42 L636.1 450.99 L646.57 450.42 L651.32 444.71 L658.93 437.1 L664.64 436.15 L667.5 437.1 L671.3 431.39 L676.06 429.49 L680.81 429.11 L685.57 431.01 L691.28 434.25 L696.99 434.82 L720.01 434.44 L894.3 434.2" fill="none" stroke="#1c6c1c" stroke-width="1.1" stroke-linejoin="miter"/>
<path d="M502.7 494 L560 494.56 L575.22 494.56 L579.03 497.41 L582.83 497.03 L586.64 489.42 L590.44 480.86 L598.05 473.25 L607.56 463.74 L617.08 458.03 L624.69 456.7 L643.71 456.51 L647.52 459.93 L653.23 464.69 L658.93 466.59 L663.69 464.69 L670.35 466.21 L677.96 467.54 L685.57 466.59 L693.18 463.74 L704.6 464.12 L720.01 464.69 L894.3 466.3" fill="none" stroke="#1a1aa8" stroke-width="2.1" stroke-linejoin="miter"/>
<path d="M502.7 420.7 L560 420.55 L573.32 421.5 L579.03 421.31 L581.88 426.64 L585.68 436.15 L589.49 446.23 L593.3 444.33 L599 444.71 L602.81 451.37 L611.37 461.26 L617.08 462.4 L630.4 462.21 L636.1 461.26 L647.52 460.88 L651.32 456.13 L657.03 452.32 L663.69 455.18 L667.5 461.83 L670.35 455.18 L674.16 449.85 L677.96 444.71 L681.77 446.23 L687.47 450.99 L693.18 452.32 L704.6 451.75 L720.01 451.37 L894.3 451" fill="none" stroke="#b8141c" stroke-width="1.4" stroke-linejoin="miter"/>
<circle cx="507.7" cy="356.2" r="4.6" fill="#ff1818"/>
<text transform="translate(514.5 358.7) scale(0.82 1)" class="lg">Roll</text>
<circle cx="548.8" cy="356.2" r="4.6" fill="#179a17"/>
<text transform="translate(555.7 358.7) scale(0.82 1)" class="lg">Pitch</text>
<circle cx="594.7" cy="356.2" r="4.6" fill="#1414ff"/>
<text transform="translate(601.5 358.7) scale(0.82 1)" class="lg">Yaw</text>
<text transform="translate(698.8 553.2) scale(0.8 1)" class="ax" text-anchor="middle">Seconds (2019-01-08 21:26:28.632)</text>
<text transform="translate(469.1 443.5) rotate(-90) scale(0.84 1)" class="ax" text-anchor="middle">Angle (°)</text>
</svg>
<svg class="abs" style="left:0;top:0;" width="919" height="578" viewBox="0 0 919 578">
<g stroke="#9a9a9a" stroke-width="0.9" fill="none"><path d="M370.3 17.3 h7.2"/><rect x="402.3" y="13.4" width="6.6" height="6.8"/><path d="M434.8 13.4 l7.2 7.2 M442 13.4 l-7.2 7.2"/></g>
<g stroke="#9a9a9a" stroke-width="0.9" fill="none"><path d="M369.1 209.9 h7.2"/><rect x="401.1" y="206" width="6.6" height="6.8"/><path d="M433.6 206 l7.2 7.2 M440.8 206 l-7.2 7.2"/></g>
<g stroke="#9a9a9a" stroke-width="0.9" fill="none"><path d="M368.5 388.5 h7.2"/><rect x="400.5" y="384.6" width="6.6" height="6.8"/><path d="M433 384.6 l7.2 7.2 M440.2 384.6 l-7.2 7.2"/></g>
<g stroke="#222" stroke-width="0.9" fill="none"><path d="M820.7 332.8 h7.2"/><rect x="852.7" y="328.9" width="6.6" height="6.8"/><path d="M885.2 328.9 l7.2 7.2 M892.4 328.9 l-7.2 7.2"/></g>
</svg>
</div></body></html>
